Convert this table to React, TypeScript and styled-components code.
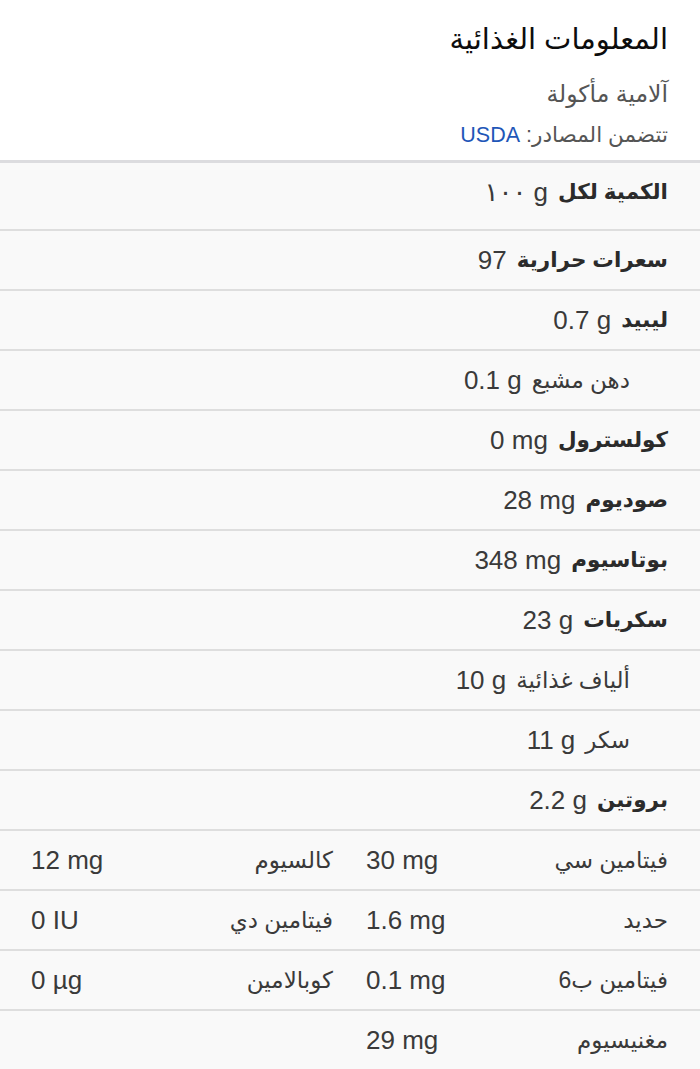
import React from "react";
import styled, { createGlobalStyle } from "styled-components";

const GlobalStyle = createGlobalStyle`
  html, body { margin: 0; padding: 0; background: #ffffff; }
  body { font-family: "Liberation Sans", "DejaVu Sans", sans-serif; }
`;

const Page = styled.div`
  width: 700px;
  direction: rtl;
  font-family: "Liberation Sans", "DejaVu Sans", sans-serif;
`;

const Header = styled.header`
  background: #ffffff;
  padding: 18px 32px 0 0;
  height: 142px;
  border-bottom: 3px solid #dcdcdf;
  display: flex;
  flex-direction: column;
`;

const Title = styled.h1`
  margin: 0;
  font-size: 29px;
  font-weight: 400;
  color: #0d0d0d;
  line-height: 42px;
`;

const Subtitle = styled.div`
  margin-top: 19px;
  font-size: 23.5px;
  color: #555;
  line-height: 30px;
`;

const Source = styled.div`
  margin-top: 12px;
  font-size: 21.5px;
  color: #555;
  line-height: 28px;
`;

const Link = styled.span`
  color: #1f57b8;
`;

const List = styled.div`
  background: #f9f9f9;
`;

const Row = styled.div<{ $indent?: boolean; $tall?: boolean }>`
  height: 58px;
  border-bottom: 2px solid #dedede;
  display: flex;
  align-items: center;
  gap: 10px;
  padding-right: ${(p) => (p.$indent ? 70 : 32)}px;
  padding-bottom: ${(p) => (p.$tall ? 8 : 0)}px;
  color: #3a3a3a;
`;

const Label = styled.span<{ $bold?: boolean }>`
  font-size: ${(p) => (p.$bold ? 21.5 : 23)}px;
  font-weight: ${(p) => (p.$bold ? 700 : 400)};
  color: ${(p) => (p.$bold ? "#2b2b2b" : "#3a3a3a")};
`;

const Value = styled.span`
  direction: ltr;
  unicode-bidi: isolate;
  font-size: 26px;
`;

const GridRow = styled.div`
  height: 58px;
  border-bottom: 2px solid #dedede;
  display: grid;
  grid-template-columns: 1fr 1fr;
  column-gap: 33px;
  align-items: center;
  padding: 0 32px 0 31px;
  color: #3a3a3a;
`;

const Cell = styled.div`
  display: flex;
  justify-content: space-between;
  align-items: center;
`;

type Item = { label: string; value: string; bold?: boolean; indent?: boolean };

const items: Item[] = [
  { label: "سعرات حرارية", value: "97", bold: true },
  { label: "ليبيد", value: "0.7 g", bold: true },
  { label: "دهن مشبع", value: "0.1 g", indent: true },
  { label: "كولسترول", value: "0 mg", bold: true },
  { label: "صوديوم", value: "28 mg", bold: true },
  { label: "بوتاسيوم", value: "348 mg", bold: true },
  { label: "سكريات", value: "23 g", bold: true },
  { label: "ألياف غذائية", value: "10 g", indent: true },
  { label: "سكر", value: "11 g", indent: true },
  { label: "بروتين", value: "2.2 g", bold: true },
];

type Pair = { label: string; value: string };
const vitamins: [Pair, Pair | null][] = [
  [{ label: "فيتامين سي", value: "30 mg" }, { label: "كالسيوم", value: "12 mg" }],
  [{ label: "حديد", value: "1.6 mg" }, { label: "فيتامين دي", value: "0 IU" }],
  [{ label: "فيتامين ب6", value: "0.1 mg" }, { label: "كوبالامين", value: "0 µg" }],
  [{ label: "مغنيسيوم", value: "29 mg" }, null],
];

export default function App() {
  return (
    <Page>
      <GlobalStyle />
      <Header>
        <Title>المعلومات الغذائية</Title>
        <Subtitle>آلامية مأكولة</Subtitle>
        <Source>
          تتضمن المصادر: <Link>USDA</Link>
        </Source>
      </Header>
      <List>
        <Row $tall>
          <Label $bold>الكمية لكل</Label>
          <Value>١٠٠ g</Value>
        </Row>
        {items.map((it) => (
          <Row key={it.label} $indent={it.indent}>
            <Label $bold={it.bold}>{it.label}</Label>
            <Value>{it.value}</Value>
          </Row>
        ))}
        {vitamins.map(([a, b], i) => (
          <GridRow key={i}>
            <Cell>
              <Label>{a.label}</Label>
              <Value>{a.value}</Value>
            </Cell>
            <Cell>
              {b && (
                <>
                  <Label>{b.label}</Label>
                  <Value>{b.value}</Value>
                </>
              )}
            </Cell>
          </GridRow>
        ))}
      </List>
    </Page>
  );
}
